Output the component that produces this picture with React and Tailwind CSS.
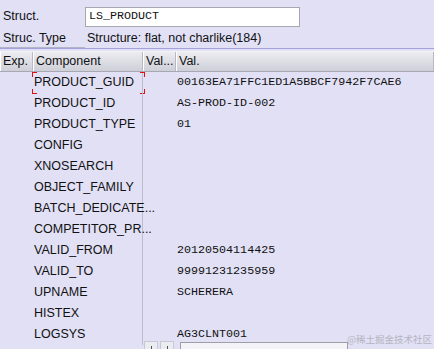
import React from "react";

const rows = [
  ["PRODUCT_GUID", "00163EA71FFC1ED1A5BBCF7942F7CAE6"],
  ["PRODUCT_ID", "AS-PROD-ID-002"],
  ["PRODUCT_TYPE", "01"],
  ["CONFIG", ""],
  ["XNOSEARCH", ""],
  ["OBJECT_FAMILY", ""],
  ["BATCH_DEDICATE...", ""],
  ["COMPETITOR_PR...", ""],
  ["VALID_FROM", "20120504114425"],
  ["VALID_TO", "99991231235959"],
  ["UPNAME", "SCHERERA"],
  ["HISTEX", ""],
  ["LOGSYS", "AG3CLNT001"],
];

const sans = { fontFamily: '"Liberation Sans", Arial, sans-serif' };
const mono = { fontFamily: '"Liberation Mono", "Courier New", monospace' };

function HeadCell({ w, children, grow }) {
  return (
    <div
      className={`h-full flex items-center pl-[3px] border-r border-r-[#b9b9c4] shadow-[inset_1px_0_0_#ffffff] overflow-hidden whitespace-nowrap ${grow ? "flex-1" : ""}`}
      style={grow ? undefined : { width: w }}
    >
      {children}
    </div>
  );
}

export default function App() {
  return (
    <div
      className="w-[434px] h-[349px] bg-[#e1e0f5] text-[12.5px] text-[#111] relative overflow-hidden"
      style={sans}
    >
      {/* Struct row */}
      <div className="flex items-center h-[29px] pt-[4px]">
        <div className="w-[85px] pl-[3px]">Struct.</div>
        <div className="w-[215px] h-[20px] bg-white border border-[#a7a7b0] flex items-center pl-[3px] text-[11.7px]" style={mono}>
          LS_PRODUCT
        </div>
      </div>
      {/* Struc. Type row */}
      <div className="flex items-center h-[19px]">
        <div className="w-[85px] pl-[3px] h-full flex items-center border-b border-b-[#b4b4c8]">Struc. Type</div>
        <div className="pl-[2px]">Structure: flat, not charlike(184)</div>
      </div>
      <div className="h-[3px] border-t border-t-[#a59fe0]"></div>
      {/* header */}
      <div className="h-[21px] flex bg-gradient-to-b from-[#ececf1] to-[#cfcfd8] border-b border-b-[#a8a8b4] border-t border-t-[#f4f4f8]">
        <HeadCell w={33}>Exp.</HeadCell>
        <HeadCell w={110}>Component</HeadCell>
        <HeadCell w={33}>Val...</HeadCell>
        <HeadCell grow>Val.</HeadCell>
      </div>
      {/* rows */}
      <div className="flex flex-col">
        {rows.map(([c, v], i) => (
          <div key={i} className="h-[21px] flex items-center">
            <div className="w-[33px]"></div>
            <div className="w-[110px] h-full flex items-center pl-[1px] border-r border-r-[#bdbdcc] relative whitespace-nowrap">
              {c}
              {i === 0 && (
                <>
                  <span className="absolute left-[-1px] top-[0px] w-[5px] h-[5px] border-l border-t border-[#e01010]"></span>
                  <span className="absolute right-[-3px] top-[0px] w-[5px] h-[5px] border-r border-t border-[#e01010]"></span>
                  <span className="absolute left-[-1px] bottom-[-1px] w-[5px] h-[5px] border-l border-b border-[#e01010]"></span>
                  <span className="absolute right-[-3px] bottom-[-1px] w-[5px] h-[5px] border-r border-b border-[#e01010]"></span>
                </>
              )}
            </div>
            <div className="w-[33px]"></div>
            <div className="pl-[1px] text-[11.7px] whitespace-nowrap" style={mono}>{v}</div>
          </div>
        ))}
      </div>
      {/* bottom scroll controls */}
      <div className="absolute left-[144px] top-[341px] flex items-end gap-[2px]">
        <div className="w-[14px] h-[10px] bg-[#ebebf2] border border-[#c8c8d2] flex justify-center">
          <span className="w-[1px] h-[4px] bg-[#555] mt-[4px]"></span>
        </div>
        <div className="w-[14px] h-[10px] bg-[#ebebf2] border border-[#c8c8d2] flex justify-center">
          <span className="w-[1px] h-[4px] bg-[#555] mt-[4px]"></span>
        </div>
        <div className="ml-[4px] w-[168px] h-[9px] bg-[#f4f4f8] border-t border-l border-r border-[#9e9eaa]"></div>
      </div>
      <div
        className="absolute right-[2px] bottom-[3px] text-[9.5px] text-[#b4b4c0]"
        style={{ fontFamily: '"Noto Sans CJK SC", sans-serif' }}
      >
        @稀土掘金技术社区
      </div>
    </div>
  );
}
